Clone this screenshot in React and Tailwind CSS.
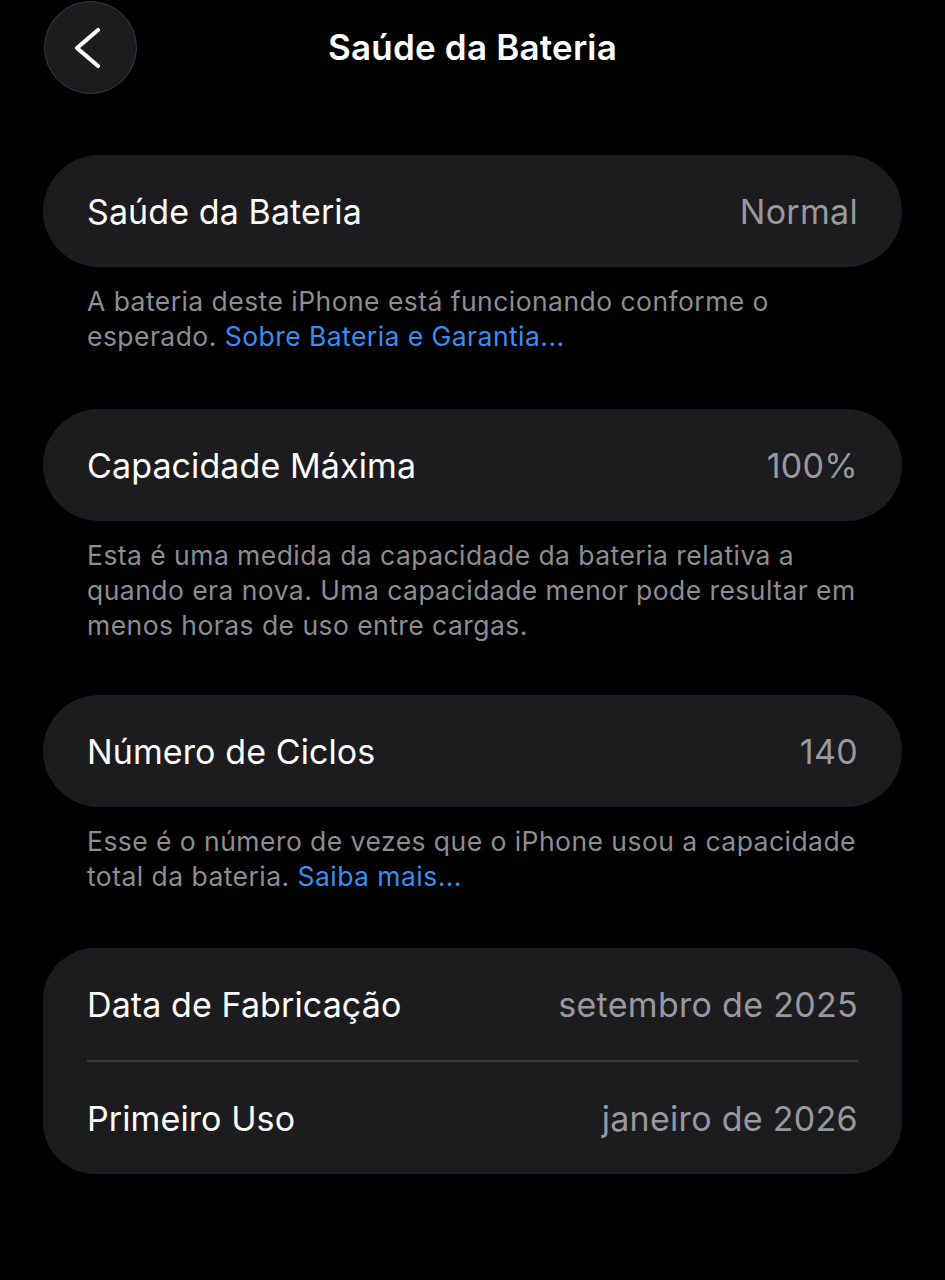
const Row = ({ label, value }) => (
  <div className="flex items-center justify-between h-[112px] px-[44px]">
    <span className="text-[34px] text-white tracking-[0.1px]">{label}</span>
    <span className="text-[34px] text-[#98989e] tracking-[0.3px]">{value}</span>
  </div>
);

const Caption = ({ children }) => (
  <p className="pl-[44px] pr-[22px] pt-[17px] text-[26.5px] leading-[35px] text-[#8d8d93] tracking-[0.45px]">
    {children}
  </p>
);

const App = () => {
  return (
    <div
      className="min-h-[1280px] w-full bg-black"
      style={{ fontFamily: 'Inter, "Noto Sans", sans-serif' }}
    >
      {/* Header */}
      <div className="relative h-[94px] flex items-center justify-center">
        <button className="absolute left-[44px] top-[1px] w-[93px] h-[93px] rounded-full bg-[#1c1c1e] border border-[#3a3a3c]">
          <svg width="93" height="93" viewBox="0 0 93 93" className="absolute -left-px -top-px">
            <path d="M54 29 L33 47 L54 65" fill="none" stroke="white" strokeWidth="4.2" strokeLinecap="round" strokeLinejoin="round" />
          </svg>
        </button>
        <h1 className="text-[35px] font-semibold text-white tracking-[0.2px]">Saúde da Bateria</h1>
      </div>

      <div className="px-[43px] pt-[61px]">
        {/* Section 1 */}
        <div className="bg-[#1c1c1e] rounded-full">
          <Row label="Saúde da Bateria" value="Normal" />
        </div>
        <Caption>
          A bateria deste iPhone está funcionando conforme o esperado.{' '}
          <span className="text-[#3a8ef2]">Sobre Bateria e Garantia...</span>
        </Caption>

        {/* Section 2 */}
        <div className="bg-[#1c1c1e] rounded-full mt-[55px]">
          <Row label="Capacidade Máxima" value="100%" />
        </div>
        <Caption>
          Esta é uma medida da capacidade da bateria relativa a quando era nova. Uma capacidade menor pode resultar em menos horas de uso entre cargas.
        </Caption>

        {/* Section 3 */}
        <div className="bg-[#1c1c1e] rounded-full mt-[52px]">
          <Row label="Número de Ciclos" value="140" />
        </div>
        <Caption>
          Esse é o número de vezes que o iPhone usou a capacidade total da bateria.{' '}
          <span className="text-[#3a8ef2]">Saiba mais...</span>
        </Caption>

        {/* Section 4 */}
        <div className="bg-[#1c1c1e] rounded-[52px] mt-[54px] overflow-hidden">
          <Row label="Data de Fabricação" value="setembro de 2025" />
          <div className="mx-[44px] h-[2px] bg-[#38383a]" />
          <Row label="Primeiro Uso" value="janeiro de 2026" />
        </div>
      </div>
    </div>
  );
};

export default App;
